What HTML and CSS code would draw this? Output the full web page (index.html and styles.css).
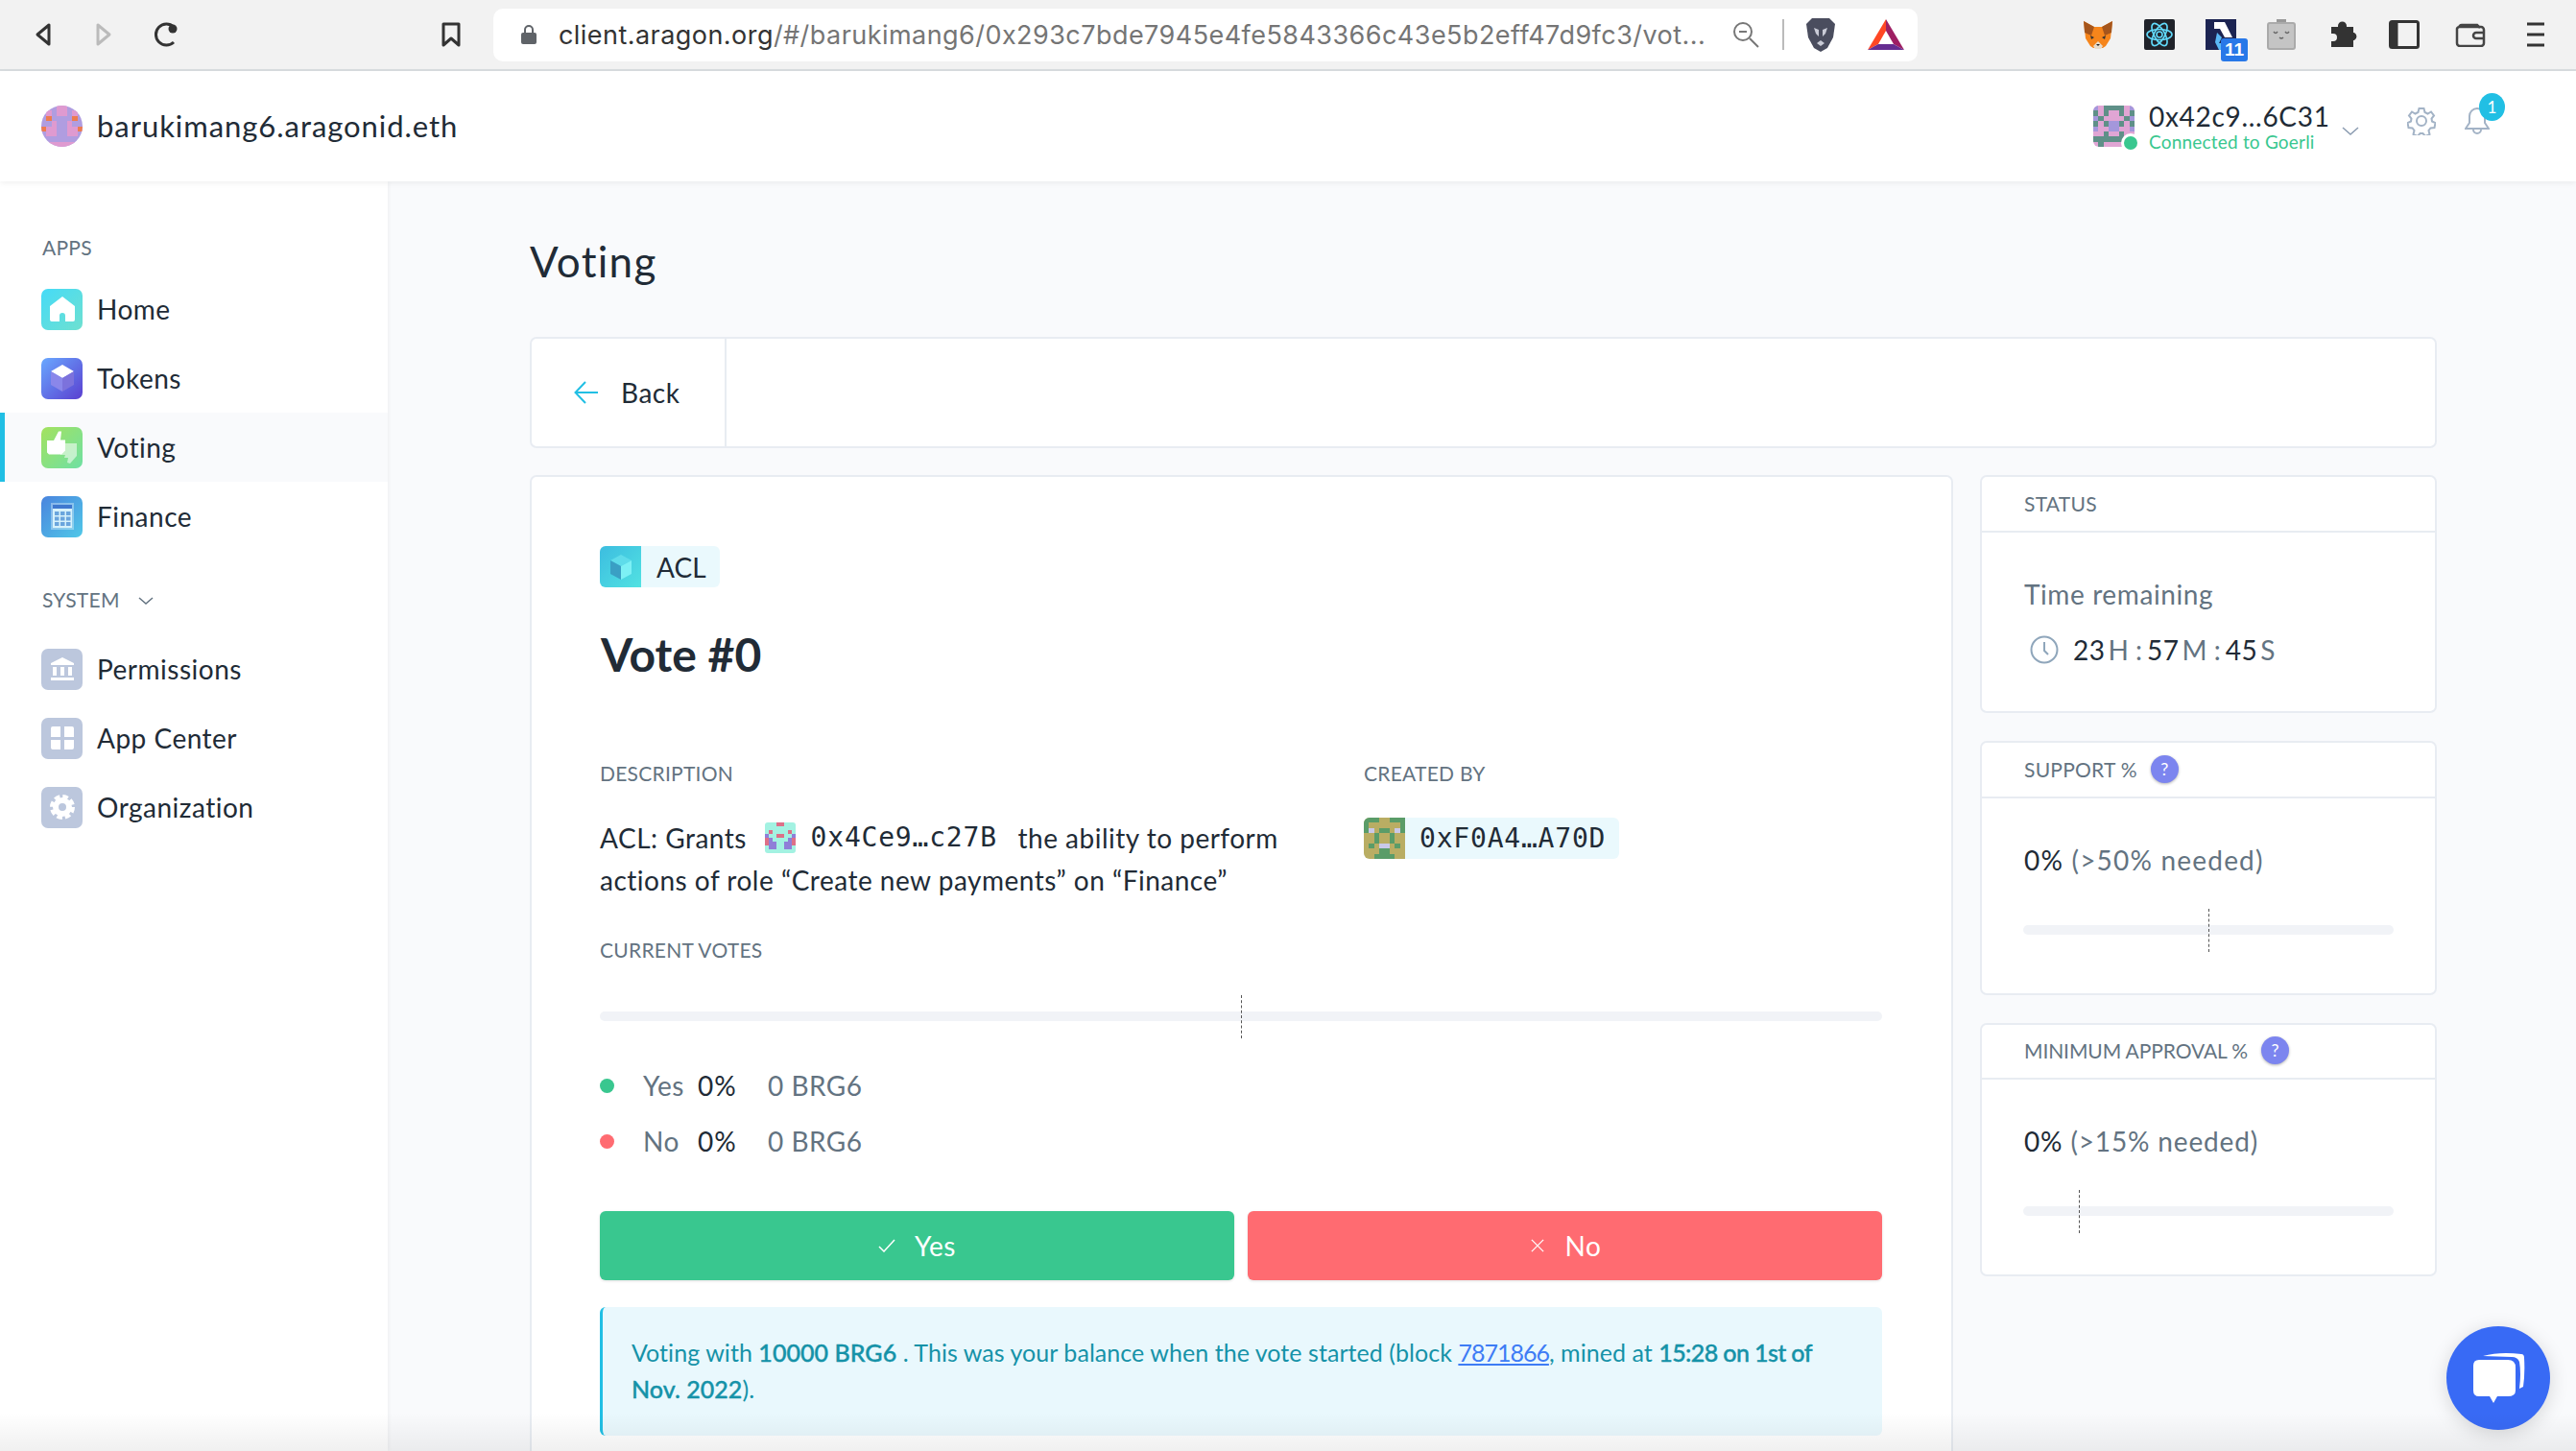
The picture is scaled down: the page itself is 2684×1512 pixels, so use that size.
FILE: index.html
```html
<!DOCTYPE html>
<html>
	<head>
		<title>Voting</title>
		<link rel="stylesheet" href="styles.css">
	</head>
	<body>
		<div class="toolbar">
			<svg class="tb-icon back" viewBox="0 0 20 26"><path d="M16 3v20L4 13z" fill="none" stroke="#333" stroke-width="3" stroke-linejoin="round"/></svg>
			<svg class="tb-icon forward" viewBox="0 0 20 26"><path d="M4 3v20l12-10z" fill="none" stroke="#bbb" stroke-width="3" stroke-linejoin="round"/></svg>
			<svg class="tb-icon reload" viewBox="0 0 30 26"><path d="M23 21a11 11 0 1 1 0-16" fill="none" stroke="#333" stroke-width="3"/><circle cx="22" cy="7" r="4.500" fill="#333"/></svg>
			<svg class="tb-icon bookmark" viewBox="0 0 20 26"><path d="M2 2h16v22l-8-7-8 7z" fill="none" stroke="#333" stroke-width="3" stroke-linejoin="round"/></svg>
			<div class="urlbar">
				<svg class="lock" viewBox="0 0 20 22"><path d="M6 10V6a4 4 0 0 1 8 0v4" fill="none" stroke="#5f6368" stroke-width="2"/><rect x="2" y="9" width="16" height="12" rx="2" fill="#5f6368"/></svg>
				<div class="url"><span class="url-host">client.aragon.org</span>/#/barukimang6/0x293c7bde7945e4fe5843366c43e5b2eff47d9fc3/vot...</div>
				<svg class="zoom-out" viewBox="0 0 28 28"><circle cx="11" cy="11" r="9" fill="none" stroke="#777" stroke-width="2"/><path d="M7 11h8M18 18l9 9" stroke="#777" stroke-width="2"/></svg>
				<div class="url-sep"></div>
				<svg class="brave" viewBox="0 0 32 36"><path d="M7 1h18l6 6-2 14-6 11-7 4-7-4-6-11L1 7z" fill="#4a4d5e"/><path d="M9 11l5 2v7l-3-3zM23 11l-5 2v7l3-3zM12 27l4-3 4 3-4 3z" fill="#c9cbd6"/></svg>
				<svg class="bat" viewBox="0 0 38 32"><path d="M19 0L0 32l11-6 8-14z" fill="#ff4724"/><path d="M19 0l19 32-11-6-8-14z" fill="#9e1f63"/><path d="M0 32h38l-11-6H11z" fill="#662d91"/></svg>
			</div>
			<div class="extensions">
				<svg class="ext fox" viewBox="0 0 32 32"><path d="M1 2l11 6h8l11-6-2 18-5 8-3 2h-10l-3-2-5-8z" fill="#f6851b"/><path d="M1 2l11 6-3 9-7-3zM31 2L20 8l3 9 7-3z" fill="#a5551c"/><path d="M11 28l5-5 5 5-2 3h-6z" fill="#e8dccb"/><path d="M14 26h4l-2 2z" fill="#222"/><path d="M8 17l4 2-3 2zM24 17l-4 2 3 2z" fill="#333"/></svg>
				<svg class="ext" viewBox="0 0 32 32"><rect width="32" height="32" rx="2" fill="#20232a"/><g fill="none" stroke="#61dafb" stroke-width="1.600"><ellipse cx="16" cy="16" rx="13" ry="5.500"/><ellipse cx="16" cy="16" rx="13" ry="5.500" transform="rotate(60 16 16)"/><ellipse cx="16" cy="16" rx="13" ry="5.500" transform="rotate(120 16 16)"/><circle cx="16" cy="16" r="3"/></g></svg>
				<div class="ext-badged">
					<svg class="ext" viewBox="0 0 32 32"><rect width="32" height="32" fill="#1c2452"/><path d="M9 3h11l8 16h-8l-5-9H9z" fill="#fff"/><path d="M12 14l5 5-3 6h8l4 7H14l-4-8z" fill="#5ab8f5"/></svg>
					<span class="ext-count">11</span>
				</div>
				<svg class="ext clip" viewBox="0 0 30 32"><path d="M10 0h10v5H10z" fill="#999"/><rect x="1" y="4" width="28" height="27" rx="2" fill="#c4c4c4" stroke="#aaa" stroke-width="2"/><path d="M7 13q2 3 4 0M19 13q2 3 4 0M13 19q2 2 4 0" fill="none" stroke="#666" stroke-width="1.400"/></svg>
				<svg class="ext puzzle" viewBox="0 0 30 28"><path d="M2 6h7V5a4.500 4.500 0 0 1 9 0v1h7v6h1a4.500 4.500 0 0 1 0 8h-1v7H2v-6h2a4 4 0 0 0 0-8H2z" fill="#333"/></svg>
				<svg class="ext panel" viewBox="0 0 32 30"><rect x="1.500" y="1.500" width="29" height="27" rx="2" fill="none" stroke="#333" stroke-width="3"/><rect x="1.500" y="1.500" width="8" height="27" fill="#333"/></svg>
				<svg class="ext wallet" viewBox="0 0 32 25"><path d="M4 5a3 3 0 0 1 3-3h16l3 3M2 6a3 3 0 0 1 3-2h22a3 3 0 0 1 3 3v14a3 3 0 0 1-3 3H5a3 3 0 0 1-3-3z" fill="none" stroke="#444" stroke-width="2.500"/><path d="M30 10h-8a3 3 0 0 0 0 6h8" fill="none" stroke="#444" stroke-width="2.500"/></svg>
				<svg class="ext menu" viewBox="0 0 18 26"><path d="M0 2h18M0 13h18M0 24h18" stroke="#333" stroke-width="3"/></svg>
			</div>
		</div>

		<div class="topbar">
			<svg class="avatar round" viewBox="0 0 8 8" shape-rendering="crispEdges"><rect width="8" height="8" fill="#b09de0"/><path d="M3 .5h2M1 1.500h1M3 1.500h2M6 1.500h1M2 3.500h1M5 3.500h1M1 4.500h2M5 4.500h2M1 5.500h2M5 5.500h2M0 7.500h8" stroke="#df9ad0"/><path d="M1 2.500h1M6 2.500h1M0 4.500h1M7 4.500h1" stroke="#ee7b50"/></svg>
			<div class="org-name">barukimang6.aragonid.eth</div>
			<div class="account">
				<div class="account-avatar">
					<svg class="avatar" viewBox="0 0 8 8" shape-rendering="crispEdges"><rect width="8" height="8" fill="#e0a5d4"/><path d="M2 .5h4M0 1.500h1M2 1.500h1M5 1.500h1M7 1.500h1M1 2.500h1M6 2.500h1M0 3.500h1M2 3.500h1M5 3.500h1M7 3.500h1M2 5.500h1M5 5.500h1M0 6.500h8M1 7.500h1M6 7.500h1" stroke="#5f9088"/><path d="M0 .5h1M7 .5h1M0 2.500h1M7 2.500h1M3 3.500h2M3 4.500h2M0 4.500h1M7 4.500h1" stroke="#a497db"/></svg>
					<span class="online-dot"></span>
				</div>
				<div class="account-text">
					<div class="account-addr">0x42c9...6C31</div>
					<div class="account-net">Connected to Goerli</div>
				</div>
				<svg class="account-chevron" viewBox="0 0 18 9"><path d="M1 1l8 7 8-7" fill="none" stroke="#8a9bb0" stroke-width="1.500"/></svg>
			</div>
			<svg class="gear" viewBox="0 0 30 30"><g fill="none" stroke="#a3b3c6" stroke-width="2"><circle cx="15" cy="15" r="5"/><path d="M12.500 2h5l1 4 3 1.500 3.500-2 3 4-2.500 3 .5 3 3.500 1.500-1 5-4 .5-2 2.500 1 4-4.500 2-2.500-3h-3l-2.500 3-4.500-2 1-4-2-2.500-4-.5-1-5 3.500-1.500.5-3-2.500-3 3-4 3.500 2 3-1.500z"/></g></svg>
			<div class="bell">
				<svg viewBox="0 0 26 30"><path d="M13 2a8 8 0 0 1 8 8v7l4 6H1l4-6v-7a8 8 0 0 1 8-8zM9 24a4 4 0 0 0 8 0" fill="none" stroke="#a3b3c6" stroke-width="2"/></svg>
				<span class="bell-count">1</span>
			</div>
		</div>

		<div class="page">
			<div class="sidebar">
				<div class="side-label">APPS</div>
				<div class="side-item">
					<span class="app-icon icon-home"><svg viewBox="0 0 26 26"><path d="M13 0L0 10v14a2 2 0 0 0 2 2h8v-6a3 3 0 0 1 6 0v6h8a2 2 0 0 0 2-2V10z" fill="#fff"/></svg></span>Home
				</div>
				<div class="side-item">
					<span class="app-icon icon-tokens"><svg class="cube" viewBox="0 0 26 30"><path d="M13 1l12 7-12 7L1 8z" fill="#fff"/><path d="M1 8l12 7v14L1 22z" fill="#8a87ea"/><path d="M25 8l-12 7v14l12-7z" fill="#7c72dc"/></svg></span>Tokens
				</div>
				<div class="side-item active">
					<span class="app-icon icon-voting"><svg class="tile" viewBox="0 0 43 43"><path d="M37 17H20v12h5l-1 3h4l-1 5 3 1 7-8z" fill="#fff" opacity=".55"/><path d="M6 14h7l5-9.500h3l-1 9h5v11l-4 4H8l-2-2z" fill="#fff"/></svg></span>Voting
				</div>
				<div class="side-item">
					<span class="app-icon icon-finance"><svg class="calc" viewBox="0 0 24 28"><rect x="0" y="0" width="24" height="28" fill="#fff" opacity=".35"/><rect x="2" y="2" width="20" height="24" fill="#d6f1fb"/><rect x="2" y="2" width="20" height="4" fill="#3f78cf"/><path d="M4 9h4.500v4H4zM10 9h4.500v4H10zM16 9h4.500v4H16zM4 14.500h4.500v4H4zM10 14.500h4.500v4H10zM16 14.500h4.500v4H16zM4 20h4.500v4H4zM10 20h4.500v4H10zM16 20h4.500v4H16z" fill="#6aa5dd"/></svg></span>Finance
				</div>
				<div class="side-label system">SYSTEM <svg viewBox="0 0 16 9"><path d="M1 1l7 6 7-6" fill="none" stroke="#637381" stroke-width="1.500"/></svg></div>
				<div class="side-item">
					<span class="app-icon icon-system"><svg viewBox="0 0 26 26"><path d="M13 1L1 7v2h24V7zM3 11h4v9H3zM11 11h4v9h-4zM19 11h4v9h-4zM1 22h24v3H1z" fill="#fff"/></svg></span>Permissions
				</div>
				<div class="side-item">
					<span class="app-icon icon-system"><svg viewBox="0 0 26 26"><path d="M1 3a2 2 0 0 1 2-2h8v11H1zM15 1h8a2 2 0 0 1 2 2v9H15zM1 15h10v10H3a2 2 0 0 1-2-2zM15 15h10v8a2 2 0 0 1-2 2h-8z" fill="#fff"/></svg></span>App Center
				</div>
				<div class="side-item">
					<span class="app-icon icon-system"><svg viewBox="0 0 26 26"><g fill="none" stroke="#fff"><circle cx="13" cy="13" r="7" stroke-width="6"/><circle cx="13" cy="13" r="11" stroke-width="4" stroke-dasharray="5.640 3"/></g></svg></span>Organization
				</div>
			</div>

			<div class="main">
				<h1 class="page-title">Voting</h1>
				<div class="backbar">
					<div class="back-btn">
						<svg viewBox="0 0 26 24"><path d="M25 12H2M12 1L1.500 12 12 23" fill="none" stroke="#21bfe4" stroke-width="2"/></svg>
						Back
					</div>
				</div>

				<div class="columns">
					<div class="card vote-card">
						<div class="app-badge">
							<span class="badge-icon"><svg viewBox="0 0 24 28"><path d="M12 1l11 6-11 6L1 7z" fill="#5fdcea"/><path d="M1 7l11 6v14L1 21z" fill="#3a9fc4"/><path d="M23 7l-11 6v14l11-6z" fill="#7df0f5"/></svg></span>
							ACL
						</div>
						<h2 class="vote-title">Vote #0</h2>

						<div class="details">
							<div>
								<div class="label">DESCRIPTION</div>
								<div class="description">
									ACL: Grants
									<span class="inline-addr"><svg class="mini-avatar" viewBox="0 0 8 8" shape-rendering="crispEdges"><rect width="8" height="8" fill="#a3f2e2"/><path d="M3 .5h2M1 2.500h1M6 2.500h1M3 3.500h2M0 4.500h1M7 4.500h1M0 5.500h1M7 5.500h1" stroke="#dd7088"/><path d="M0 3.500h1M7 3.500h1M1 4.500h1M6 4.500h1M1 5.500h2M5 5.500h2M1 6.500h2M5 6.500h2" stroke="#8f7fd8"/></svg><span class="mono">0x4Ce9…c27B</span></span>
									the ability to perform<br>
									actions of role “Create new payments” on “Finance”
								</div>
							</div>
							<div>
								<div class="label">CREATED BY</div>
								<div class="creator">
									<svg class="avatar" viewBox="0 0 8 8" shape-rendering="crispEdges"><rect width="8" height="8" fill="#b9ad63"/><path d="M0 .5h3M5 .5h3M0 1.500h1M7 1.500h1M0 2.500h1M7 2.500h1M3 2.500h2M2 3.500h1M5 3.500h1M2 4.500h1M5 4.500h1M1 5.500h1M6 5.500h1M2 7.500h4M3 6.500h2" stroke="#5a9c68"/><path d="M1 2.500h1M6 2.500h1M3 5.500h2" stroke="#c9c9e8"/></svg>
									<span class="mono">0xF0A4…A70D</span>
								</div>
							</div>
						</div>

						<div class="label votes-label">CURRENT VOTES</div>
						<div class="track votes-track"><span class="marker marker-half"></span></div>
						<div class="legend">
							<span class="dot dot-yes"></span><span class="legend-name">Yes</span><span class="legend-pct">0%</span><span class="legend-amt">0 BRG6</span>
						</div>
						<div class="legend">
							<span class="dot dot-no"></span><span class="legend-name">No</span><span class="legend-pct">0%</span><span class="legend-amt">0 BRG6</span>
						</div>
						<div class="vote-btns">
							<div class="vote-btn btn-yes"><svg viewBox="0 0 18 14"><path d="M1 8l5 5L17 1" fill="none" stroke="#fff" stroke-width="1.500"/></svg>Yes</div>
							<div class="vote-btn btn-no"><svg viewBox="0 0 16 16"><path d="M1 1l14 14M15 1L1 15" fill="none" stroke="#fff" stroke-width="1.500"/></svg>No</div>
						</div>
						<div class="info">
							Voting with <b>10000 BRG6</b> . This was your balance when the vote started (block <a class="info-link" href="#">7871866</a>, mined at <b class="mined-at">15:28 on 1st of</b><br>
							<b>Nov. 2022</b>).
						</div>
					</div>

					<div class="side-cards">
						<div class="card box status-box">
							<div class="box-head">STATUS</div>
							<div class="box-value muted">Time remaining</div>
							<div class="timer">
								<svg viewBox="0 0 30 30"><circle cx="15" cy="15" r="13.500" fill="none" stroke="#8fa6bb" stroke-width="2"/><path d="M15 7v9l4 4" fill="none" stroke="#8fa6bb" stroke-width="2"/></svg>
								<span class="time-num">23</span><span class="time-unit">H :</span><span class="time-num">57</span><span class="time-unit">M :</span><span class="time-num">45</span><span class="time-unit">S</span>
							</div>
						</div>
						<div class="card box support-box">
							<div class="box-head">SUPPORT % <span class="help">?</span></div>
							<div class="box-value">0% <span class="muted">(&gt;50% needed)</span></div>
							<div class="track box-track"><span class="marker marker-half"></span></div>
						</div>
						<div class="card box approval-box">
							<div class="box-head">MINIMUM APPROVAL % <span class="help">?</span></div>
							<div class="box-value">0% <span class="muted">(&gt;15% needed)</span></div>
							<div class="track box-track"><span class="marker marker-low"></span></div>
						</div>
					</div>
				</div>
			</div>
		</div>

		<div class="chat">
			<svg viewBox="0 0 56 54"><path d="M12 4Q30-1 52 2q3 0 3 4 1 16-1 30l-4 2q2-16 0-28-2-5-8-5z" fill="#fff"/><path d="M8 8h30q8 0 8 8v24q0 6-8 6H27l-4 7-4-7H8q-6 0-6-6V14q0-6 6-6z" fill="#fff"/></svg>
		</div>
		<div class="window-fade"></div>
	</body>
</html>
```

FILE: styles.css
```css
* {
	box-sizing: border-box;
}

html, body {
	margin: 0;
	height: 100%;
	overflow: hidden;
}

body {
	position: relative;
	background: #f9fafc;
	color: #212b36;
	font-family: "Lato", "Open Sans", sans-serif;
	font-size: 28px;
	letter-spacing: .5px;
}

/* browser chrome */
.toolbar {
	height: 74px;
	background: #f2f2f2;
	border-bottom: 2px solid #d8dcdf;
	display: flex;
	align-items: center;
	padding-left: 35px;
	letter-spacing: 0;
}

.tb-icon {
	height: 26px;
	flex: none;
}

.back { width: 20px; }
.forward { width: 20px; margin-left: 43px; }
.reload { width: 30px; margin-left: 40px; }
.bookmark { width: 20px; margin-left: 272px; }

.urlbar {
	width: 1484px;
	height: 55px;
	margin-left: 34px;
	background: #fff;
	border-radius: 10px;
	display: flex;
	align-items: center;
	padding-left: 27px;
}

.lock { width: 20px; height: 22px; }

.url {
	margin-left: 21px;
	width: 1202px;
	white-space: nowrap;
	overflow: hidden;
	font-family: "Inter", "Liberation Sans", sans-serif;
	font-size: 27px;
	letter-spacing: .45px;
	color: #757575;
}

.url-host { color: #333; }

.zoom-out { width: 28px; height: 28px; margin-left: 21px; }
.url-sep { width: 2px; height: 32px; background: #bbb; margin-left: 24px; }
.brave { width: 32px; height: 36px; margin-left: 22px; }
.bat { width: 38px; height: 32px; margin-left: 33px; }

.extensions {
	display: flex;
	align-items: center;
	margin-left: 172px;
}

.ext {
	width: 32px;
	height: 32px;
	display: block;
}

.extensions > * + * { margin-left: 32px; }

.ext-badged { position: relative; }

.ext-count {
	position: absolute;
	left: 16px;
	top: 20px;
	width: 28px;
	height: 24px;
	border-radius: 3px;
	background: #2878e8;
	color: #fff;
	font: bold 19px/24px "Liberation Sans", sans-serif;
	text-align: center;
}

.extensions .clip { width: 30px; height: 32px; }
.extensions .puzzle { width: 30px; height: 28px; margin-left: 35px; }
.extensions .panel { height: 30px; }
.extensions .wallet { height: 25px; margin-left: 37px; }
.extensions .menu { width: 18px; height: 26px; margin-left: 43px; }

/* app header */
.topbar {
	height: 115px;
	background: #fff;
	box-shadow: 0 2px 6px rgba(0, 0, 0, .06);
	position: relative;
	z-index: 2;
	display: flex;
	align-items: center;
	padding-left: 43px;
}

.avatar {
	width: 43px;
	height: 43px;
	display: block;
	border-radius: 6px;
	flex: none;
}

.round { border-radius: 50%; }

.org-name {
	margin-left: 15px;
	padding-bottom: 2px;
	font-size: 31px;
	letter-spacing: .95px;
}

.account {
	margin-left: auto;
	display: flex;
	align-items: center;
}

.account-avatar { position: relative; }

.online-dot {
	position: absolute;
	right: -6px;
	bottom: -6px;
	width: 20px;
	height: 20px;
	border-radius: 50%;
	background: #39c78f;
	border: 3px solid #fff;
}

.account-text {
	margin-left: 15px;
	width: 201px;
}

.account-addr {
	font-size: 28px;
	line-height: 32px;
	letter-spacing: .7px;
}

.account-net {
	font-size: 19px;
	line-height: 22px;
	letter-spacing: .2px;
	color: #39c78f;
}

.account-chevron { width: 18px; height: 9px; margin-top: 9px; }

.gear { width: 30px; height: 30px; margin-left: 50px; margin-top: -12px; }

.bell {
	position: relative;
	width: 26px;
	height: 30px;
	margin: -12px 90px 0 30px;
}

.bell svg { display: block; }

.bell-count {
	position: absolute;
	left: 15px;
	top: -14px;
	width: 27px;
	height: 29px;
	border-radius: 50%;
	background: #21bfe4;
	color: #fff;
	font-size: 17px;
	line-height: 29px;
	letter-spacing: 0;
	text-align: center;
}

/* sidebar */
.page {
	display: flex;
	height: 1323px;
}

.sidebar {
	width: 404px;
	flex: none;
	background: #fff;
	padding-top: 57px;
	box-shadow: 1px 0 4px rgba(0, 0, 0, .05);
}

.side-label {
	margin-left: 44px;
	height: 24px;
	font-size: 21px;
	line-height: 24px;
	letter-spacing: .25px;
	color: #637381;
	margin-bottom: 16px;
}

.system {
	margin-top: 39px;
	margin-bottom: 24px;
}

.system svg {
	width: 16px;
	height: 9px;
	margin-left: 14px;
	vertical-align: 2px;
}

.side-item {
	height: 72px;
	display: flex;
	align-items: center;
	padding-left: 43px;
	font-size: 28px;
}

.side-item.active {
	background: #f9fafc;
	border-left: 5px solid #21bfe4;
	padding-left: 38px;
}

.app-icon {
	width: 43px;
	height: 43px;
	border-radius: 7px;
	margin-right: 15px;
	display: flex;
	align-items: center;
	justify-content: center;
	flex: none;
}

.app-icon svg { width: 26px; height: 26px; }
.app-icon .cube { height: 30px; }
.app-icon .tile { width: 43px; height: 43px; }
.app-icon .calc { width: 24px; height: 28px; }

.icon-home { background: linear-gradient(135deg, #45dbf7, #6fe0d0); }
.icon-tokens { background: linear-gradient(135deg, #69a8ff, #5a3fd0); }
.icon-voting { background: linear-gradient(135deg, #a4e25e, #6fe0a4); }
.icon-finance { background: linear-gradient(135deg, #4a84de, #50c8e8); }
.icon-system { background: #bcc7dd; }

/* main column */
.main {
	flex: 1;
	padding: 53px 0 0 148px;
}

.page-title {
	margin: 0;
	font-size: 44px;
	font-weight: normal;
	line-height: 60px;
	letter-spacing: 1.300px;
}

.card {
	background: #fff;
	border: 2px solid #e8ecf2;
	border-radius: 7px;
}

.backbar {
	width: 1987px;
	height: 116px;
	margin-top: 49px;
	background: #fff;
	border: 2px solid #e8ecf2;
	border-radius: 7px;
}

.back-btn {
	width: 203px;
	height: 100%;
	border-right: 2px solid #e8ecf2;
	display: flex;
	align-items: center;
	padding-left: 44px;
	font-size: 28px;
}

.back-btn svg { width: 26px; height: 24px; margin-right: 23px; }

.columns {
	display: flex;
	gap: 28px;
	margin-top: 28px;
	width: 1987px;
}

.vote-card {
	width: 1483px;
	height: 1100px;
	padding: 72px 72px 0 71px;
}

.app-badge {
	width: 125px;
	height: 43px;
	background: #eaf9fd;
	border-radius: 6px;
	display: flex;
	align-items: center;
	font-size: 28px;
	letter-spacing: 0;
}

.badge-icon {
	width: 43px;
	height: 43px;
	border-radius: 6px 0 0 6px;
	background: linear-gradient(135deg, #3cbde0, #52e2e2);
	display: flex;
	align-items: center;
	justify-content: center;
	margin-right: 16px;
}

.badge-icon svg { width: 24px; height: 28px; }

.vote-title {
	margin: 40px 0 0 1px;
	font-size: 48px;
	font-weight: bold;
	line-height: 60px;
	letter-spacing: 0;
}

.details {
	display: grid;
	grid-template-columns: 796px 1fr;
	margin-top: 82px;
}

.label {
	font-size: 21px;
	line-height: 24px;
	letter-spacing: .25px;
	color: #637381;
}

.description {
	margin-top: 33px;
	font-size: 28px;
	line-height: 44px;
}

.inline-addr {
	display: inline-flex;
	align-items: center;
	vertical-align: top;
	height: 44px;
	margin: 0 14px 0 11px;
}

.mini-avatar {
	width: 32px;
	height: 32px;
	margin-right: 16px;
	border-radius: 3px;
}

.mono {
	font-family: "DejaVu Sans Mono", monospace;
	font-size: 28px;
	letter-spacing: .8px;
}

.creator {
	display: flex;
	align-items: center;
	width: 266px;
	height: 43px;
	margin-top: 34px;
	background: #eaf9fd;
	border-radius: 6px;
	overflow: hidden;
}

.creator .avatar {
	border-radius: 0;
	margin-right: 15px;
}

.votes-label { margin-top: 39px; }

.track {
	position: relative;
	height: 10px;
	border-radius: 5px;
	background: #f1f3f7;
}

.votes-track { margin-top: 52px; }

.marker {
	position: absolute;
	top: -17px;
	height: 45px;
	border-left: 1px dashed #555;
}

.marker-half { left: 50%; }
.marker-low { left: 15%; }

.legend {
	height: 58px;
	display: flex;
	align-items: center;
}

.votes-track + .legend { margin-top: 38px; }

.dot {
	width: 15px;
	height: 15px;
	border-radius: 50%;
	margin-right: 30px;
}

.dot-yes { background: #39c78f; }
.dot-no { background: #ff6b71; }

.legend-name { width: 57px; color: #637381; }
.legend-pct { width: 73px; letter-spacing: 1px; }
.legend-amt { color: #637381; }

.vote-btns {
	display: flex;
	gap: 14px;
	margin-top: 44px;
}

.vote-btn {
	flex: 1;
	height: 72px;
	border-radius: 6px;
	color: #fff;
	display: flex;
	align-items: center;
	justify-content: center;
	box-shadow: 0 1px 3px rgba(0, 0, 0, .12);
}

.vote-btn svg { width: 18px; height: 14px; margin-right: 20px; }
.btn-yes { background: #39c78f; }
.btn-no { background: #ff6b71; }

.info {
	margin-top: 28px;
	height: 134px;
	padding: 28px 40px 0 30px;
	background: #e9f8fd;
	border-left: 3px solid #21bfe4;
	border-radius: 6px;
	color: #1592a8;
	font-size: 25px;
	line-height: 38px;
	letter-spacing: .05px;
}

.info b { font-weight: 500; -webkit-text-stroke: .4px #1592a8; }
.info .mined-at { letter-spacing: -.6px; }
.info-link { color: #3d7cf5; letter-spacing: -1px; }

/* right column */
.side-cards {
	width: 476px;
	display: flex;
	flex-direction: column;
	gap: 29px;
}

.status-box { height: 248px; }
.support-box { height: 265px; }
.approval-box { height: 264px; }

.box-head {
	height: 58px;
	border-bottom: 2px solid #e8ecf2;
	display: flex;
	align-items: center;
	padding: 0 0 2px 44px;
	font-size: 21px;
	letter-spacing: .25px;
	color: #637381;
}

.approval-box .box-head { height: 57px; letter-spacing: -.1px; }

.help {
	width: 29px;
	height: 29px;
	margin-left: 14px;
	border-radius: 50%;
	background: #7c85ef;
	box-shadow: 0 1px 3px rgba(0, 0, 0, .3);
	color: #fff;
	font-size: 18px;
	line-height: 29px;
	letter-spacing: 0;
	text-align: center;
}

.box-value {
	margin: 44px 0 0 44px;
	line-height: 40px;
	font-size: 28px;
	letter-spacing: .9px;
}

.status-box .box-value { letter-spacing: .6px; }
.support-box .box-value { letter-spacing: 1.200px; }
.approval-box .box-value { letter-spacing: .85px; }

.muted { color: #637381; }

.timer {
	display: flex;
	align-items: center;
	height: 40px;
	margin: 18px 0 0 50px;
}

.timer svg { width: 30px; height: 30px; margin-right: 15px; }
.time-unit { color: #637381; margin: 0 5px 0 3px; letter-spacing: 0; }

.box-track {
	margin: 48px 43px 0 43px;
}

/* chat bubble */
.chat {
	position: absolute;
	left: 2549px;
	top: 1382px;
	width: 108px;
	height: 108px;
	border-radius: 50%;
	background: #386af5;
	box-shadow: 0 4px 20px rgba(0, 0, 0, .15);
	display: flex;
	align-items: center;
	justify-content: center;
	z-index: 3;
}

.chat svg { width: 56px; height: 54px; }

/* the fade along the bottom edge of the window */
.window-fade {
	position: absolute;
	left: 0;
	right: 0;
	bottom: 0;
	height: 40px;
	background: linear-gradient(rgba(0, 0, 0, 0), rgba(0, 0, 0, .06));
	z-index: 4;
	pointer-events: none;
}
```
